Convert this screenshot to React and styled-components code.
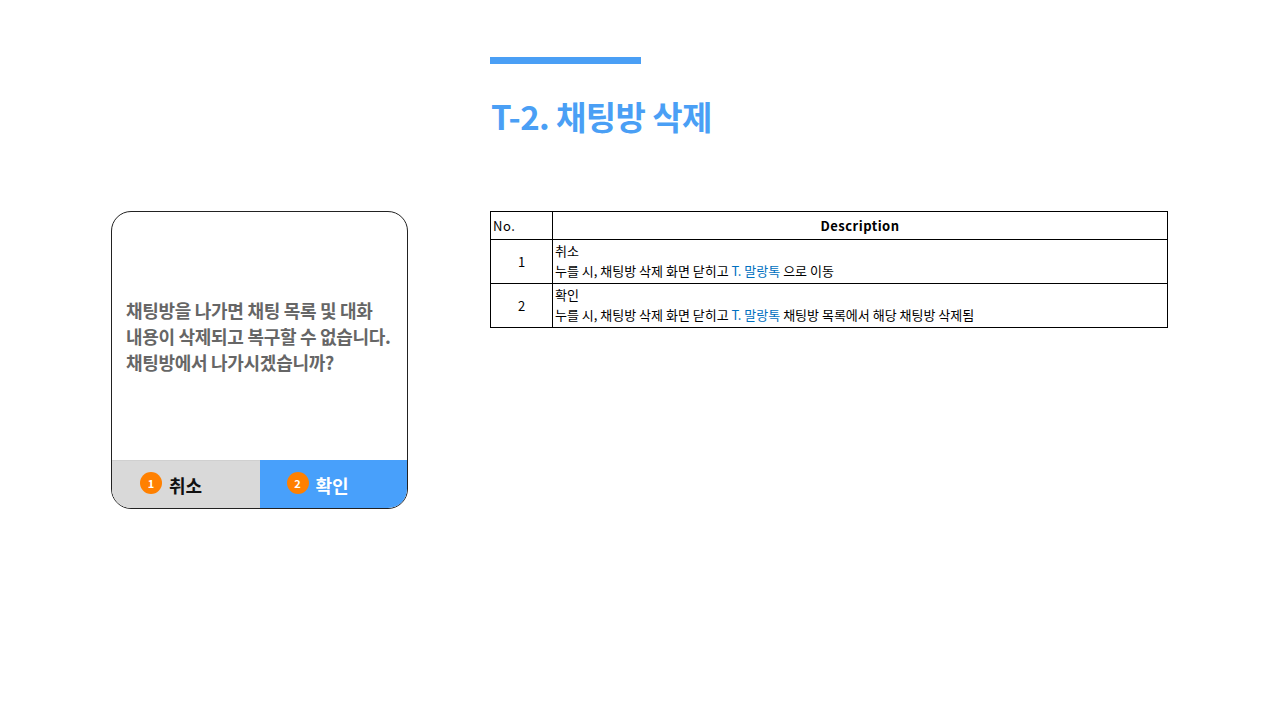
import React from 'react';
import styled, { createGlobalStyle } from 'styled-components';

const GlobalStyle = createGlobalStyle`
  html, body {
    margin: 0;
    padding: 0;
    background: #ffffff;
  }
  body {
    font-family: "Noto Sans CJK KR", "Noto Sans", sans-serif;
  }
`;

const Page = styled.div`
  width: 1280px;
  height: 720px;
  display: flex;
  flex-direction: column;
  box-sizing: border-box;
  padding: 57px 0 0 111px;
`;

const Header = styled.div`
  display: flex;
  flex-direction: column;
  margin-left: 379px;
`;

const AccentBar = styled.div`
  width: 151px;
  height: 7px;
  background: #4a9ff5;
`;

const Title = styled.h1`
  margin: 28px 0 0 1px;
  font-size: 33px;
  line-height: 48px;
  font-weight: 700;
  color: #4a9ff5;
  letter-spacing: -0.6px;
`;

const Content = styled.div`
  display: flex;
  align-items: flex-start;
  gap: 82px;
  margin-top: 71px;
`;

const Phone = styled.div`
  width: 297px;
  height: 298px;
  box-sizing: border-box;
  border: 1px solid #222;
  border-radius: 20px;
  overflow: hidden;
  display: flex;
  flex-direction: column;
`;

const Message = styled.div`
  flex: 1;
  display: flex;
  align-items: center;
  padding: 0 10px 0 14px;
  font-size: 18px;
  line-height: 26px;
  font-weight: 700;
  color: #666666;
  letter-spacing: -0.3px;
`;

const ButtonRow = styled.div`
  display: grid;
  grid-template-columns: 1fr 1fr;
  height: 48px;
`;

const DialogButton = styled.div`
  display: flex;
  align-items: center;
  gap: 7px;
  padding-left: ${p => p.$pad}px;
  background: ${p => (p.$primary ? '#48a0fb' : '#d9d9d9')};
  color: ${p => (p.$primary ? '#ffffff' : '#111111')};
  font-size: 18px;
  font-weight: 700;
  border-top: 1px solid ${p => (p.$primary ? '#48a0fb' : '#d0d0d0')};
`;

const Badge = styled.span`
  width: 22px;
  height: 22px;
  border-radius: 50%;
  background: #ff8000;
  color: #ffffff;
  font-size: 11px;
  font-weight: 700;
  display: inline-flex;
  align-items: center;
  justify-content: center;
  margin-top: -4px;
`;

const Table = styled.table`
  width: 678px;
  border-collapse: collapse;
  font-size: 13px;
  color: #000;
  td, th {
    border: 1px solid #000;
    padding: 0 2px;
  }
`;

const HeadCell = styled.th`
  height: 27px;
  font-weight: ${p => (p.$bold ? 700 : 400)};
  text-align: ${p => (p.$left ? 'left' : 'center')};
  width: ${p => p.$w || 'auto'};
  letter-spacing: 0.5px;
`;

const NumCell = styled.td`
  text-align: center;
  height: 43px;
`;

const DescCell = styled.td`
  line-height: 20px;
  vertical-align: middle;
  padding-bottom: 2px !important;
`;

const Link = styled.span`
  color: #0070c0;
`;

const rows = [
  { no: 1, title: '취소', before: '누를 시, 채팅방 삭제 화면 닫히고 ', after: ' 으로 이동' },
  { no: 2, title: '확인', before: '누를 시, 채팅방 삭제 화면 닫히고 ', after: ' 채팅방 목록에서 해당 채팅방 삭제됨' },
];

export default function App() {
  return (
    <Page>
      <GlobalStyle />
      <Header>
        <AccentBar />
        <Title>T-2. 채팅방 삭제</Title>
      </Header>
      <Content>
        <Phone>
          <Message>
            채팅방을 나가면 채팅 목록 및 대화<br />
            내용이 삭제되고 복구할 수 없습니다.<br />
            채팅방에서 나가시겠습니까?
          </Message>
          <ButtonRow>
            <DialogButton $pad={28}>
              <Badge>1</Badge>취소
            </DialogButton>
            <DialogButton $primary $pad={27}>
              <Badge>2</Badge>확인
            </DialogButton>
          </ButtonRow>
        </Phone>
        <Table>
          <thead>
            <tr>
              <HeadCell $left $w="57px">No.</HeadCell>
              <HeadCell $bold>Description</HeadCell>
            </tr>
          </thead>
          <tbody>
            {rows.map(r => (
              <tr key={r.no}>
                <NumCell>{r.no}</NumCell>
                <DescCell>
                  {r.title}<br />
                  {r.before}<Link>T. 말랑톡</Link>{r.after}
                </DescCell>
              </tr>
            ))}
          </tbody>
        </Table>
      </Content>
    </Page>
  );
}
